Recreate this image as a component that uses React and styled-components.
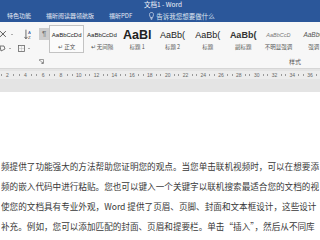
import React from "react";
import styled, {createGlobalStyle, css} from "styled-components";

const GlobalStyle = createGlobalStyle`
  html, body {
    margin: 0;
    padding: 0;
    background: #ffffff;
  }
  body {
    width: 320px;
    height: 240px;
    overflow: hidden;
    font-family: "Noto Sans CJK SC", "Liberation Sans", sans-serif;
  }
`

const cjk = `"Noto Sans CJK SC", "Liberation Sans", sans-serif`
const latin = `"Liberation Sans", "Noto Sans CJK SC", sans-serif`

const Window = styled.div`
  width: 320px;
  height: 240px;
  display: flex;
  flex-direction: column;
  overflow: hidden;
`

const TitleBar = styled.div`
  height: 10px;
  background: #2b579a;
  color: #f2f5fa;
  font-family: ${cjk};
  font-size: 6.5px;
  line-height: 8px;
  padding-left: 6px;
  text-align: center;
  white-space: nowrap;
`

const TabBar = styled.div`
  height: 12px;
  background: #2b579a;
  display: flex;
  align-items: center;
  padding-left: 7px;
  gap: 15px;
  white-space: nowrap;
`

const Tab = styled.span`
  color: #e3e9f3;
  font-family: ${cjk};
  font-size: 6px;
  line-height: 12px;
`

const TellMe = styled.span`
  display: flex;
  align-items: center;
  gap: 2px;
  margin-left: 2px;
  color: #dfe6f1;
  font-family: ${cjk};
  font-size: 6.5px;
`

const Ribbon = styled.div`
  height: 46px;
  background: #f7f7f7;
  border-bottom: 1px solid #d6d6d6;
  display: grid;
  grid-template-columns: 49px 1fr;
  grid-template-rows: 32px 14px;
`

const ToolColumn = styled.div`
  display: flex;
  flex-direction: column;
  padding-top: 6px;
  gap: 4px;
`

const ToolRow = styled.div`
  display: flex;
  align-items: center;
  height: ${({h}) => h}px;
  gap: 2px;
`

const Spacer = styled.span`
  width: ${({w}) => w}px;
`

const Caret = styled.span`
  width: 0;
  height: 0;
  border-left: 1.5px solid transparent;
  border-right: 1.5px solid transparent;
  border-top: 1.5px solid #666;
  margin: 0 1px;
`

const Pilcrow = styled.span`
  width: 10px;
  height: 12px;
  background: #cdcdcd;
  color: #777;
  font-family: ${latin};
  font-size: 8px;
  line-height: 12px;
  text-align: center;
  margin-left: 6px;
`

const Gallery = styled.div`
  display: flex;
  padding-top: 3px;
  overflow: hidden;
`

const StyleItem = styled.div`
  flex: 0 0 35.3px;
  height: 28px;
  box-sizing: border-box;
  display: flex;
  flex-direction: column;
  align-items: center;
  border: 1px solid transparent;
  ${({selected}) => selected && css`
    border-color: #c3c3c3;
    background: #fbfbfb;
  `}
`

const Preview = styled.div`
  height: 17px;
  display: flex;
  align-items: center;
  justify-content: center;
  white-space: nowrap;
  font-family: ${latin};
  color: ${({color}) => color || "#222"};
  font-size: ${({size}) => size}px;
  font-weight: ${({bold}) => bold ? 700 : 400};
  font-style: ${({italic}) => italic ? "italic" : "normal"};
`

const StyleName = styled.div`
  font-family: ${cjk};
  font-size: 5.5px;
  line-height: 8px;
  color: #555;
  white-space: nowrap;
`

const LauncherCell = styled.div`
  display: flex;
  justify-content: flex-end;
  align-items: center;
  padding-right: 5px;
`

const GroupLabel = styled.div`
  display: flex;
  justify-content: flex-end;
  align-items: center;
  padding-right: 19px;
  font-family: ${cjk};
  font-size: 6px;
  color: #555;
`

const RulerArea = styled.div`
  height: 23px;
  background: #e4e4e4;
  padding-top: 2px;
  box-sizing: border-box;
`

const RulerStrip = styled.div`
  height: 8px;
  background: #ececec;
  display: flex;
  margin-left: -1.4px;
  overflow: hidden;
`

const RulerCell = styled.div`
  flex: 0 0 17.8px;
  display: flex;
  align-items: center;
  justify-content: space-around;
  font-family: ${latin};
  font-size: 5px;
  color: #666;
`

const Tick = styled.span`
  width: 1px;
  height: 2px;
  background: #999;
`

const Document = styled.div`
  flex: 1;
  background: #ffffff;
  padding-top: 64px;
  padding-left: 1px;
`

const Line = styled.div`
  height: 20px;
  line-height: 20px;
  font-family: ${cjk};
  font-size: 8.6px;
  color: #383838;
  white-space: nowrap;
  overflow: hidden;
`

const styles = [
    {preview: "AaBbCcDd", name: "↵ 正文", size: 6, selected: true},
    {preview: "AaBbCcDd", name: "↵ 无间隔", size: 6},
    {preview: "AaBl", name: "标题 1", size: 12.5, bold: true},
    {preview: "AaBb(", name: "标题 2", size: 9},
    {preview: "AaBb(", name: "标题", size: 9},
    {preview: "AaBb(", name: "副标题", size: 9, bold: true, color: "#333"},
    {preview: "AaBbCcD", name: "不明显强调", size: 5.5, italic: true, color: "#777"},
    {preview: "AaBbC", name: "强调", size: 6.5, italic: true, color: "#555"},
]

const lines = [
    "频提供了功能强大的方法帮助您证明您的观点。当您单击联机视频时，可以在想要添",
    "频的嵌入代码中进行粘贴。您也可以键入一个关键字以联机搜索最适合您的文档的视",
    "使您的文档具有专业外观，Word 提供了页眉、页脚、封面和文本框设计，这些设计",
    "补充。例如，您可以添加匹配的封面、页眉和提要栏。单击“插入”，然后从不同库",
]

const ClearIcon = () => (
    <svg width="8" height="8" viewBox="0 0 8 8">
        <path d="M0 1 L6 7 M6 1 L0 7" stroke="#555" strokeWidth="1"/>
    </svg>
)

const SortIcon = () => (
    <svg width="8" height="11" viewBox="0 0 8 11">
        <path d="M2 0.5 V9.5 M0.5 8 L2 10 L3.5 8" stroke="#444" strokeWidth="0.8" fill="none"/>
        <text x="4.2" y="4.5" fontSize="4.5" fontFamily="Liberation Sans" fill="#2b579a">A</text>
        <text x="4.2" y="10" fontSize="4.5" fontFamily="Liberation Sans" fill="#444">Z</text>
    </svg>
)

const ShadingIcon = () => (
    <svg width="6" height="7" viewBox="0 0 6 7">
        <path d="M0 1 L4 1 L5 4 L1 6 Z" stroke="#555" strokeWidth="0.8" fill="none"/>
    </svg>
)

const BorderIcon = () => (
    <svg width="7" height="7" viewBox="0 0 7 7">
        <rect x="0.5" y="0.5" width="6" height="6" stroke="#666" strokeWidth="0.8" fill="none"/>
        <path d="M3.5 0.5 V6.5 M0.5 3.5 H6.5" stroke="#999" strokeWidth="0.6" strokeDasharray="1 1"/>
    </svg>
)

const LauncherIcon = () => (
    <svg width="5" height="5" viewBox="0 0 5 5">
        <path d="M0.5 2 V0.5 H4.5 V4.5 H2.5" stroke="#777" strokeWidth="0.7" fill="none"/>
        <path d="M1 1.5 L4 4.2 M2.5 4.2 H4 V2.8" stroke="#777" strokeWidth="0.7" fill="none"/>
    </svg>
)

const BulbIcon = () => (
    <svg width="5" height="8" viewBox="0 0 5 8">
        <path d="M2.5 0.5 C1 0.5 0.4 1.6 0.4 2.6 C0.4 3.8 1.4 4.3 1.4 5.5 H3.6 C3.6 4.3 4.6 3.8 4.6 2.6 C4.6 1.6 4 0.5 2.5 0.5 Z M1.5 6.4 H3.5 M1.8 7.3 H3.2" stroke="#e3e9f3" strokeWidth="0.7" fill="none"/>
    </svg>
)

const rulerNumbers = Array.from({length: 18}, (_, i) => (i + 1) * 2)

const App = () => (
    <Window>
        <GlobalStyle/>
        <TitleBar>文档1 - Word</TitleBar>
        <TabBar>
            <Tab>特色功能</Tab>
            <Tab>福昕阅读器领航版</Tab>
            <Tab>福昕PDF</Tab>
            <TellMe>
                <BulbIcon/>
                告诉我您想要做什么
            </TellMe>
        </TabBar>
        <Ribbon>
            <ToolColumn>
                <ToolRow h={12}>
                    <ClearIcon/>
                    <Caret/>
                    <Spacer w={6}/>
                    <SortIcon/>
                    <Pilcrow>¶</Pilcrow>
                </ToolRow>
                <ToolRow h={8}>
                    <ShadingIcon/>
                    <Caret/>
                    <Spacer w={2}/>
                    <BorderIcon/>
                    <Caret/>
                </ToolRow>
            </ToolColumn>
            <Gallery>
                {styles.map((s, i) => (
                    <StyleItem key={i} selected={s.selected}>
                        <Preview size={s.size} bold={s.bold} italic={s.italic} color={s.color}>{s.preview}</Preview>
                        <StyleName>{s.name}</StyleName>
                    </StyleItem>
                ))}
            </Gallery>
            <LauncherCell>
                <LauncherIcon/>
            </LauncherCell>
            <GroupLabel>样式</GroupLabel>
        </Ribbon>
        <RulerArea>
            <RulerStrip>
                {rulerNumbers.map(n => (
                    <RulerCell key={n}>
                        <Tick/>
                        <span>{n}</span>
                        <Tick/>
                    </RulerCell>
                ))}
            </RulerStrip>
        </RulerArea>
        <Document>
            {lines.map((l, i) => <Line key={i}>{l}</Line>)}
        </Document>
    </Window>
)

export default App
